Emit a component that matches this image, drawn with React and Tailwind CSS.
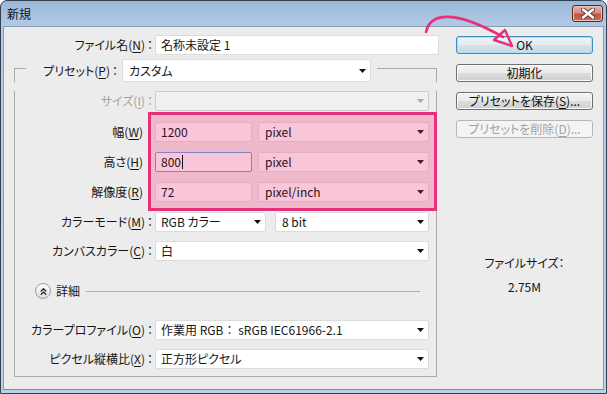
import React from "react";
import { ChevronsUp } from "lucide-react";

const Tri = ({ c = "#111111" }) => (
  <svg width="7" height="4" viewBox="0 0 7 4" className="shrink-0">
    <path d="M0 0H7L3.5 4Z" fill={c} />
  </svg>
);

const U = ({ children }) => (
  <span className="underline underline-offset-[2px] decoration-1">{children}</span>
);

const FIELD = {
  white: "bg-white border-[#dcdcdc]",
  disabled: "bg-[#f0f0f0] border-[#cdcdcd]",
  pink: "bg-[#f9c5d8] border-[#e6adc1] text-[#2a1420]",
  pinkFocus: "bg-[#f9c5d8] border-[#7f87c2] text-[#2a1420]",
};

function Field({ w, h = "h-[20px]", variant = "white", arrow, arrowColor, pl = "pl-[5px]", children }) {
  return (
    <div
      className={`${w} ${h} ${FIELD[variant]} ${pl} shrink-0 flex items-center justify-between pr-[4px] rounded-[2px] border`}
    >
      <div className="flex items-center whitespace-pre">{children}</div>
      {arrow && <Tri c={arrowColor} />}
    </div>
  );
}

function Row({ label, disabled, className = "", lw = "w-[130px]", children }) {
  const tc = disabled ? "text-[#a3a3a3]" : "";
  return (
    <div className={`flex h-[20px] items-center ${className}`}>
      <div className={`${lw} ${tc} shrink-0 text-right whitespace-nowrap`}>{label}</div>
      <div className={`${tc} w-[10px] shrink-0 flex justify-center`}>：</div>
      {children}
    </div>
  );
}

function Btn({ children, variant = "normal" }) {
  const v = {
    normal:
      "border-[#707070] bg-[linear-gradient(180deg,#f3f3f3_0%,#ebebeb_50%,#dddddd_50%,#cfcfcf_100%)] shadow-[inset_0_0_0_1px_#fbfbfb] text-[#111]",
    ok: "border-[#3c8dc3] bg-[linear-gradient(180deg,#eef3f6_0%,#e4ecf1_50%,#d6e1e8_50%,#ccd9e2_100%)] shadow-[inset_0_0_0_1px_#9fe3fa] text-[#111]",
    disabled: "border-[#b5b8ba] bg-[#f4f4f4] text-[#a3a3a3]",
  };
  return (
    <div
      className={`${v[variant]} h-[18px] w-full rounded-[3px] border flex items-center justify-center whitespace-nowrap`}
    >
      {children}
    </div>
  );
}

export default function App() {
  return (
    <div className="relative w-[607px] h-[394px] overflow-hidden font-['Noto_Sans_CJK_JP','Noto_Sans',sans-serif] text-[12px] leading-[16px] text-[#151515] [font-feature-settings:'palt']">
      <div className="flex flex-col w-full h-full rounded-t-[7px] border border-[#34404e] bg-[linear-gradient(180deg,#9bb7d8_0px,#b3cbe6_26px,#bad1ea_100%)]">
        {/* title bar */}
        <div className="h-[25px] shrink-0 flex justify-between items-start">
          <div className="mt-[5px] ml-[6px] text-[12px] text-[#111]">新規</div>
          <div className="mt-[4px] mr-[3px] w-[31px] h-[17px] rounded-[3px] border border-[#4f2a26] bg-[linear-gradient(180deg,#e8b0a8_0%,#d78c80_45%,#c5513f_55%,#cf6d55_100%)] shadow-[inset_0_0_0_1px_#efc2bb] flex items-center justify-center">
            <svg width="14" height="11" viewBox="0 0 14 11">
              <path d="M2 1.5L12 9.5M12 1.5L2 9.5" stroke="#5a3a36" strokeWidth="4.2" strokeLinecap="round" />
              <path d="M2 1.5L12 9.5M12 1.5L2 9.5" stroke="#ffffff" strokeWidth="2.4" strokeLinecap="round" />
            </svg>
          </div>
        </div>

        {/* content */}
        <div className="flex-1 mx-[2px] mb-[3px] border border-[#8a9db4] border-b-[#41a3cb] bg-[#ececec] flex pt-[8px] pl-[10px]">
          {/* left column */}
          <div className="w-[425px] shrink-0">
            <Row lw="w-[131px]" label={<>ファイル名(<U>N</U>)</>}>
              <Field w="w-[284px]">名称未設定 1</Field>
            </Row>

            {/* group box */}
            <div className="mt-[4px] w-[423px]">
              <div className="flex h-[23px]">
                <div className="mt-[9px] w-[12px] shrink-0 border-t border-l border-[#aaaaaa]" />
                <div className="w-[84px] shrink-0 flex items-center justify-end whitespace-nowrap">
                  プリセット(<U>P</U>)
                </div>
                <div className="w-[10px] shrink-0 flex items-center justify-center">：</div>
                <div className="ml-[2px]">
                  <Field w="w-[249px]" h="h-[23px]" pl="pl-[6px]" arrow>
                    カスタム
                  </Field>
                </div>
                <div className="ml-[6px] mt-[9px] flex-1 border-t border-r border-[#aaaaaa]" />
              </div>

              <div className="border-l border-r border-b border-[#aaaaaa] pb-[7px]">
                <Row className="mt-[9px]" disabled label={<>サイズ(<U>I</U>)</>}>
                  <Field w="w-[274px]" variant="disabled" arrow arrowColor="#a9a9a9" />
                </Row>

                {/* highlighted block */}
                <div className="mt-[1px] flex">
                  <div className="w-[128px] shrink-0 pt-[10px] flex flex-col gap-[10px]">
                    <div className="h-[20px] flex items-center justify-end">
                      幅(<U>W</U>)
                    </div>
                    <div className="h-[20px] flex items-center justify-end">
                      高さ(<U>H</U>)
                    </div>
                    <div className="h-[20px] flex items-center justify-end">
                      解像度(<U>R</U>)
                    </div>
                  </div>
                  <div className="ml-[5px] w-[289px] shrink-0 border-[3px] border-[#e6317a] bg-[#efb9cc] pt-[7px] pb-[6px] pl-[4px] pr-[5px] flex flex-col gap-[10px]">
                    <div className="flex gap-[6px]">
                      <Field w="w-[97px]" variant="pink">1200</Field>
                      <Field w="w-[171px]" variant="pink" pl="pl-[6px]" arrow arrowColor="#4a1a2c">
                        pixel
                      </Field>
                    </div>
                    <div className="flex gap-[6px]">
                      <Field w="w-[97px]" variant="pinkFocus">
                        800<span className="ml-[1px] w-[1px] h-[14px] bg-[#111]" />
                      </Field>
                      <Field w="w-[171px]" variant="pink" pl="pl-[6px]" arrow arrowColor="#4a1a2c">
                        pixel
                      </Field>
                    </div>
                    <div className="flex gap-[6px]">
                      <Field w="w-[97px]" variant="pink">72</Field>
                      <Field w="w-[171px]" variant="pink" pl="pl-[6px]" arrow arrowColor="#4a1a2c">
                        pixel/inch
                      </Field>
                    </div>
                  </div>
                </div>

                <Row className="mt-[1px]" label={<>カラーモード(<U>M</U>)</>}>
                  <Field w="w-[111px]" arrow>
                    RGB カラー
                  </Field>
                  <div className="ml-[9px]">
                    <Field w="w-[154px]" pl="pl-[6px]" arrow>
                      8 bit
                    </Field>
                  </div>
                </Row>

                <Row className="mt-[9px]" label={<>カンバスカラー(<U>C</U>)</>}>
                  <Field w="w-[274px]" arrow>
                    白
                  </Field>
                </Row>

                <div className="mt-[22px] h-[16px] flex items-center pl-[20px]">
                  <div className="w-[16px] h-[16px] rounded-full border border-[#9c9c9c] bg-[linear-gradient(180deg,#ffffff,#dedede)] flex items-center justify-center shrink-0">
                    <ChevronsUp size={11} strokeWidth={3} color="#2a2a2a" />
                  </div>
                  <div className="ml-[5px]">詳細</div>
                  <div className="ml-[6px] w-[334px] border-t border-[#b0b0b0]" />
                </div>

                <Row className="mt-[21px]" label={<>カラープロファイル(<U>O</U>)</>}>
                  <Field w="w-[274px]" arrow>
                    作業用 RGB<span className="mx-[3px]">：</span> sRGB IEC61966-2.1
                  </Field>
                </Row>

                <Row className="mt-[9px]" label={<>ピクセル縦横比(<U>X</U>)</>}>
                  <Field w="w-[274px]" arrow>
                    正方形ピクセル
                  </Field>
                </Row>
              </div>
            </div>
          </div>

          {/* right column */}
          <div className="ml-[17px] w-[137px] shrink-0 pt-[1px] flex flex-col">
            <div className="flex flex-col gap-[10px]">
              <Btn variant="ok">OK</Btn>
              <Btn>初期化</Btn>
              <Btn>
                プリセットを保存(<U>S</U>)...
              </Btn>
              <Btn variant="disabled">
                プリセットを削除(<U>D</U>)...
              </Btn>
            </div>
            <div className="mt-[117px] text-center">ファイルサイズ：</div>
            <div className="mt-[8px] text-center">2.75M</div>
          </div>
        </div>
      </div>

      {/* annotation arrow */}
      <svg
        className="absolute left-0 top-0 pointer-events-none"
        width="607"
        height="60"
        viewBox="0 0 607 60"
      >
        <path
          d="M426 32 C430 14 452 8 503 37"
          fill="none"
          stroke="#e8307a"
          strokeWidth="2.6"
          strokeLinecap="round"
        />
        <path
          d="M494 40 L505 30 L512 46 Z"
          fill="none"
          stroke="#e8307a"
          strokeWidth="2.4"
          strokeLinejoin="round"
        />
      </svg>
    </div>
  );
}
